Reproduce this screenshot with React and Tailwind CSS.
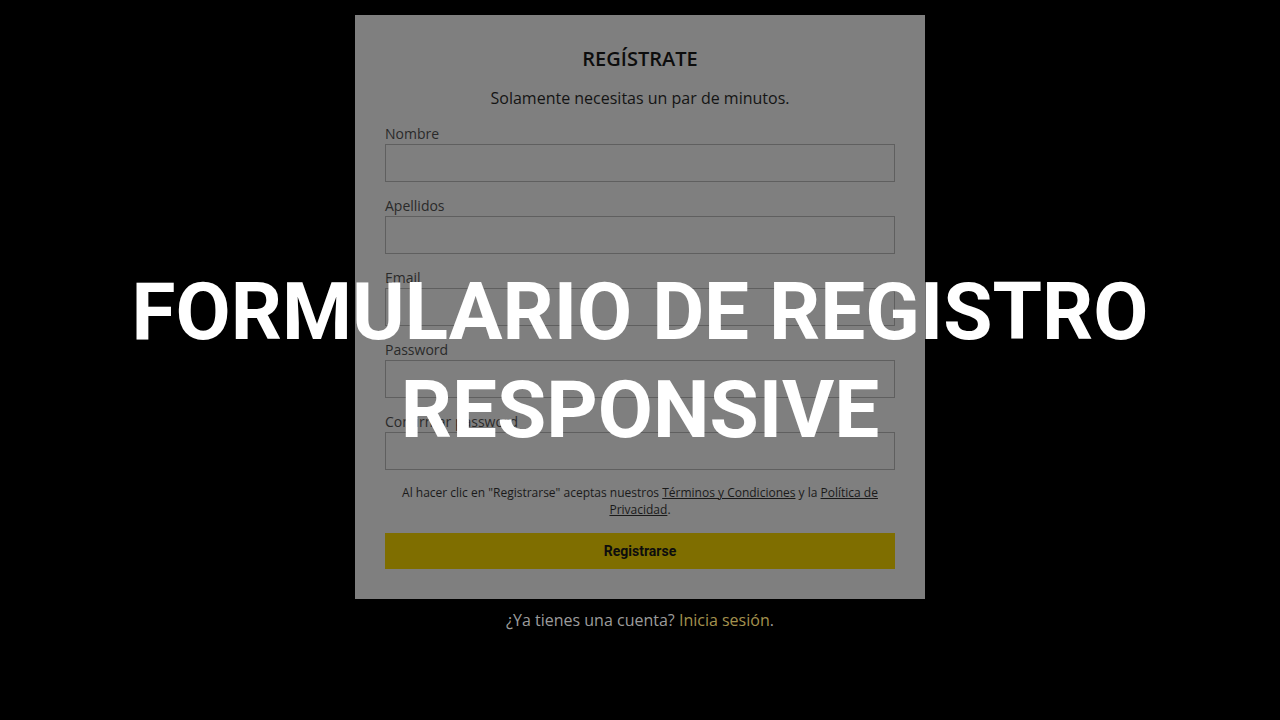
export default function App() {
  const fields = ["Nombre", "Apellidos", "Email", "Password", "Confirmar password"];
  return (
    <div className="relative w-[1280px] h-[720px] bg-black overflow-hidden" style={{ fontFamily: '"Open Sans", sans-serif' }}>
      <div className="flex flex-col items-center pt-[15px]">
        <div className="w-[570px] bg-[#7f7f7f] px-[30px] pt-[30px] pb-[30px]">
          <h1 className="text-center text-[20px] font-semibold text-[#0d0d0d] leading-[26px] mt-[1px]">REGÍSTRATE</h1>
          <p className="text-center text-[16px] text-[#141414] leading-[22px] mt-[15px]">Solamente necesitas un par de minutos.</p>
          <div className="mt-[15px] flex flex-col gap-[14px]">
            {fields.map((f) => (
              <div key={f}>
                <div className="text-[14px] leading-[20px] text-[#2a2a2a]">{f}</div>
                <div className="h-[38px] border border-[#5f5f5f] bg-[#7f7f7f]" />
              </div>
            ))}
          </div>
          <p className="mt-[14px] text-center text-[12px] leading-[17px] text-[#1a1a1a]">
            Al hacer clic en "Registrarse" aceptas nuestros <span className="underline">Términos y Condiciones</span> y la <span className="underline">Política de Privacidad</span>.
          </p>
          <div className="mt-[15px] h-[36px] bg-[#7f6e00] flex items-center justify-center text-[14px] font-bold text-[#0d0d0d]" style={{ fontFamily: 'Roboto, "Liberation Sans", sans-serif' }}>
            Registrarse
          </div>
        </div>
        <p className="mt-[9px] text-[16px] leading-[24px] text-[#9c9c9c]">
          ¿Ya tienes una cuenta? <span className="text-[#a4924e]">Inicia sesión</span>.
        </p>
      </div>
      <div className="absolute left-0 right-0 top-[263px] flex flex-col items-center text-white font-bold text-[80px] leading-[98px]" style={{ fontFamily: 'Roboto, "Liberation Sans", sans-serif' }}>
        <div>FORMULARIO DE REGISTRO</div>
        <div>RESPONSIVE</div>
      </div>
    </div>
  );
}
